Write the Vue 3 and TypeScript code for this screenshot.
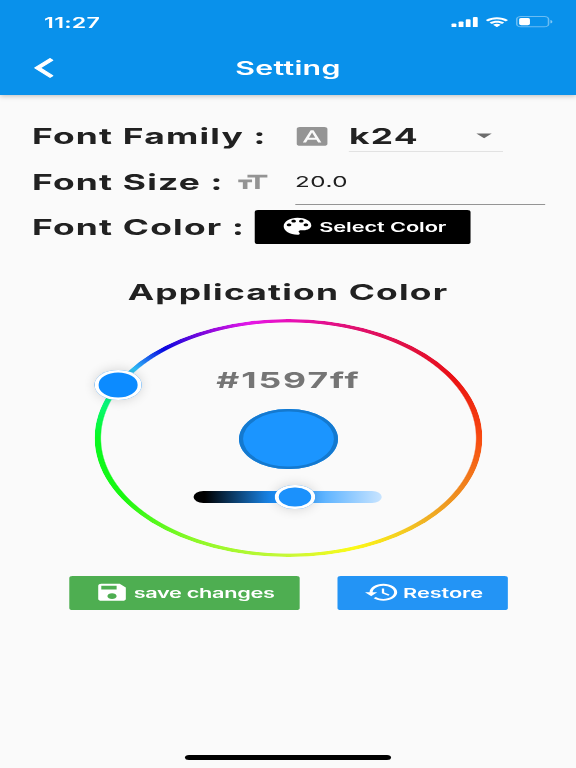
<script setup lang="ts">
import { ref } from 'vue'

const time = '11:27'
const family = ref('k24')
const size = ref('20.0')
const color = ref('#1597ff')

const icons = {
  back: 'M11.67 3.87L9.9 2.1 0 12l9.9 9.9 1.77-1.77L3.54 12z',
  font: 'M9.93 13.5h4.14L12 7.98zM20 2H4c-1.1 0-2 .9-2 2v16c0 1.1.9 2 2 2h16c1.1 0 2-.9 2-2V4c0-1.1-.9-2-2-2zm-4.05 16.5l-1.14-3H9.17l-1.12 3H5.96l5.11-13h1.86l5.11 13h-2.09z',
  size: 'M9 4v3h5v12h3V7h5V4H9zm-6 8h3v7h3v-7h3V9H3v3z',
  drop: 'M7 10l5 5 5-5z',
  palette:
    'M12 3c-4.97 0-9 4.03-9 9s4.03 9 9 9c.83 0 1.5-.67 1.5-1.5 0-.39-.15-.74-.39-1.01-.23-.26-.38-.61-.38-.99 0-.83.67-1.5 1.5-1.5H16c2.76 0 5-2.24 5-5 0-4.42-4.03-8-9-8zm-5.5 9c-.83 0-1.5-.67-1.5-1.5S5.67 9 6.5 9 8 9.67 8 10.5 7.33 12 6.5 12zm3-4C8.67 8 8 7.33 8 6.5S8.67 5 9.5 5s1.5.67 1.5 1.5S10.33 8 9.5 8zm5 0c-.83 0-1.5-.67-1.5-1.5S13.67 5 14.5 5s1.5.67 1.5 1.5S15.33 8 14.5 8zm3 4c-.83 0-1.5-.67-1.5-1.5S16.67 9 17.5 9s1.5.67 1.5 1.5-.67 1.5-1.5 1.5z',
  save: 'M17 3H5c-1.11 0-2 .9-2 2v14c0 1.1.89 2 2 2h14c1.1 0 2-.9 2-2V7l-4-4zm-5 16c-1.66 0-3-1.34-3-3s1.34-3 3-3 3 1.34 3 3-1.34 3-3 3zm3-10H5V5h10v4z',
  restore:
    'M13 3c-4.97 0-9 4.03-9 9H1l3.89 3.89.07.14L9 12H6c0-3.87 3.13-7 7-7s7 3.13 7 7-3.13 7-7 7c-1.93 0-3.68-.79-4.94-2.06l-1.42 1.42C8.27 19.99 10.51 21 13 21c4.97 0 9-4.03 9-9s-4.03-9-9-9zm-1 5v5l4.28 2.54.72-1.21-3.5-2.08V8H12z',
}
</script>

<template>
  <div class="screen">
    <header class="header">
      <div class="status">
        <span class="time">{{ time }}</span>
        <div class="indicators">
          <svg class="signal" viewBox="0 0 17 11">
            <rect x="0" y="6.8" width="3.1" height="4.2" rx="0.8" />
            <rect x="4.6" y="4.8" width="3.1" height="6.2" rx="0.8" />
            <rect x="9.2" y="2.4" width="3.1" height="8.6" rx="0.8" />
            <rect x="13.8" y="0" width="3.1" height="11" rx="0.8" />
          </svg>
          <svg class="wifi" viewBox="0 0 15 11">
            <path d="M7.5 2.3c2.1 0 4 .8 5.5 2.2.1.1.3.1.4 0l1.1-1.1c.1-.1.1-.3 0-.4-3.9-3.7-10.1-3.7-14 0-.1.1-.1.3 0 .4l1.1 1.1c.1.1.3.1.4 0C3.5 3.1 5.4 2.3 7.5 2.3z" />
            <path d="M7.5 5.9c1.2 0 2.3.4 3.1 1.2.1.1.3.1.4 0l1.1-1.1c.1-.1.1-.3 0-.4-2.6-2.4-6.6-2.4-9.2 0-.1.1-.1.3 0 .4L4 7.1c.1.1.3.1.4 0C5.2 6.3 6.3 5.9 7.5 5.9z" />
            <path d="M9.7 8.3c.1-.1.1-.3 0-.4-1.3-1.1-3.1-1.1-4.4 0-.1.1-.1.3 0 .4l2 2c.1.1.3.1.4 0z" />
          </svg>
          <svg class="battery" viewBox="0 0 24 11.5">
            <rect class="shell" x="0.5" y="0.5" width="20" height="10.3" rx="2.6" />
            <rect x="2" y="2" width="6.8" height="7.3" rx="1.4" />
            <path class="cap" d="M21.7 4v3.4c.8-.3 1.2-1 1.2-1.7s-.4-1.4-1.2-1.7z" />
          </svg>
        </div>
      </div>
      <div class="nav">
        <svg class="back" viewBox="-0.5 1.5 13 21"><path :d="icons.back" /></svg>
        <h1 class="title">Setting</h1>
      </div>
    </header>

    <main class="body">
      <section class="row">
        <span class="label family-label">Font Family :</span>
        <svg class="icon grey" viewBox="0 0 24 24"><path :d="icons.font" /></svg>
        <div class="select">
          <span class="label">{{ family }}</span>
          <svg class="icon drop" viewBox="0 0 24 24"><path :d="icons.drop" /></svg>
        </div>
      </section>
      <section class="row size-row">
        <span class="label size-label">Font Size :</span>
        <svg class="icon grey" viewBox="0 0 24 24"><path :d="icons.size" /></svg>
        <div class="field">{{ size }}</div>
      </section>
      <section class="row color-row">
        <span class="label color-label">Font Color :</span>
        <button class="btn black">
          <svg class="icon" viewBox="0 0 24 24"><path :d="icons.palette" /></svg>
          <span class="select-text">Select Color</span>
        </button>
      </section>

      <h2 class="label heading">Application Color</h2>

      <div class="picker">
        <div class="ring"></div>
        <div class="knob hue-knob"></div>
        <span class="hex">{{ color }}</span>
        <div class="swatch"></div>
        <div class="slider"><div class="knob light-knob"></div></div>
      </div>

      <div class="actions">
        <button class="btn green">
          <svg class="icon" viewBox="0 0 24 24"><path :d="icons.save" /></svg>
          <span class="save-text">save changes</span>
        </button>
        <button class="btn blue">
          <svg class="icon" viewBox="0 0 24 24"><path :d="icons.restore" /></svg>
          <span class="restore-text">Restore</span>
        </button>
      </div>
    </main>
    <div class="home"></div>
  </div>
</template>

<style>
body {
  background: #fafafa;
  overflow: hidden;
}
</style>

<style scoped>
* {
  box-sizing: border-box;
}
/* A 355px wide phone layout, widened to fill the viewport. */
.screen {
  display: flex;
  flex-direction: column;
  width: 355px;
  height: 768px;
  transform: scaleX(1.62254);
  transform-origin: 0 0;
  background: #fafafa;
  color: #212121;
  font-family: Inter, Roboto, sans-serif;
  white-space: nowrap;
}
.header {
  height: 94.5px;
  flex: none;
  background: #0991eb;
  color: #fff;
  box-shadow: 0 1px 4px rgba(0, 0, 0, 0.25);
}
.status {
  display: flex;
  justify-content: space-between;
  align-items: center;
  height: 42px;
  padding: 2px 13.5px 0 27.2px;
}
.time {
  font-size: 14.3px;
  font-weight: 600;
  letter-spacing: 0.15px;
}
.indicators {
  display: flex;
  align-items: center;
  gap: 4.5px;
}
svg {
  display: block;
  flex: none;
  fill: currentColor;
}
.signal {
  width: 16.8px;
  height: 10.5px;
}
.wifi {
  width: 14.5px;
  height: 10.6px;
}
.battery {
  width: 23.5px;
  height: 11.5px;
}
.shell {
  fill: none;
  stroke: #fff;
  stroke-opacity: 0.4;
}
.cap {
  fill-opacity: 0.5;
}
.nav {
  display: grid;
  grid-template-columns: 60px 1fr 60px;
  align-items: center;
  height: 52px;
}
.back {
  width: 12.3px;
  height: 19.9px;
  margin-left: 20.5px;
  stroke: #fff;
  stroke-width: 1;
}
.title {
  margin: 1px 0 0;
  text-align: center;
  font-size: 18.7px;
  font-weight: 600;
  letter-spacing: 0.15px;
}
.body {
  flex: 1;
  padding: 19px 0 0 19.7px;
}
.row {
  display: flex;
  align-items: center;
  height: 45.3px;
}
.label {
  font-size: 21.8px;
  font-weight: 700;
  letter-spacing: 0.75px;
}
.family-label {
  width: 161.1px;
}
.size-row {
  margin-top: 0.7px;
}
.color-row {
  margin-top: -0.7px;
}
.size-label {
  width: 124.1px;
}
.color-label {
  width: 137.7px;
}
.icon {
  width: 22.7px;
  height: 22.7px;
}
.grey {
  color: #949494;
}
.select {
  display: flex;
  align-items: center;
  justify-content: space-between;
  width: 95px;
  height: 31px;
  margin-left: 11.2px;
  padding-left: 0.5px;
  border-bottom: 1px solid #e2e2e2;
}
.drop {
  color: #6c6c6c;
}
.field {
  width: 154px;
  height: 45.3px;
  margin-left: 15.4px;
  border-bottom: 1px solid #949494;
  line-height: 46px;
  font-size: 14.9px;
  letter-spacing: 0.3px;
}
.btn {
  display: flex;
  align-items: center;
  height: 34.3px;
  padding: 0 0 0 15.1px;
  border: 0;
  border-radius: 2px;
  color: #fff;
  font-family: inherit;
  font-size: 13.4px;
  font-weight: 600;
}
.black {
  width: 133.1px;
  background: #000;
}
.heading {
  margin: 22.3px 0 0 -19.7px;
  text-align: center;
  line-height: 40px;
}
.picker {
  position: relative;
  width: 238.4px;
  height: 238.4px;
  margin: 7px 0 0 38.6px;
  transform: translateX(0.3px);
  display: flex;
  flex-direction: column;
  align-items: center;
}
.ring {
  position: absolute;
  inset: 0;
  border-radius: 50%;
  background: conic-gradient(#e810b8 0deg, #e01070 20deg, #e01040 40deg, #ea1014 59deg, #f03010 75deg, #f84a10 90deg, #ee9020 120deg, #f0b424 135deg, #fcfa18 160deg, #c8f838 180deg, #8cf828 210deg, #18f810 240deg, #08f820 270deg, #08f880 288deg, #30c0f8 306deg, #0808e0 319deg, #8c08dc 335deg, #e418e8 348deg, #e810b8 360deg);
  mask: radial-gradient(circle, transparent 115.2px, #000 116px);
}
.knob {
  position: absolute;
  border-radius: 50%;
  box-shadow: inset 0 0 0 2.5px #fff, 0 0 9px rgba(0, 0, 0, 0.16);
}
.hue-knob {
  width: 29.6px;
  height: 29.6px;
  left: -0.4px;
  top: 51.7px;
  background: #0c8bff;
}
.hex {
  height: 30px;
  margin-top: 46.5px;
  line-height: 30px;
  font-size: 21.9px;
  font-weight: 700;
  letter-spacing: 1.2px;
  color: #757575;
}
.swatch {
  width: 60.6px;
  height: 60.6px;
  margin-top: 13.5px;
  border-radius: 50%;
  background: #1b95ff;
  box-shadow: inset 0 0 0 2.5px #1479cf;
}
.slider {
  position: relative;
  width: 116px;
  height: 12px;
  margin-top: 21.8px;
  border-radius: 6px;
  background: linear-gradient(90deg, #000 6%, #1b8ffa 43%, #1b95ff 50%, #c8e4ff 100%);
}
.light-knob {
  width: 24.6px;
  height: 24.6px;
  left: 50px;
  top: -6.3px;
  background: #1b91fc;
}
.actions {
  display: flex;
  gap: 23.1px;
  margin: 18.5px 0 0 23px;
}
.green {
  width: 142.7px;
  background: #4eae51;
  transform: translateX(-0.3px);
}
.blue {
  width: 104.2px;
  background: #2394f5;
}
.select-text {
  margin-left: 1.6px;
  letter-spacing: -0.05px;
}
.save-text {
  margin-left: 2.2px;
  letter-spacing: -0.2px;
}
.restore-text {
  margin-left: 2.2px;
  letter-spacing: -0.05px;
}
.home {
  width: 126.5px;
  height: 5px;
  flex: none;
  margin: 0 auto 8px;
  border-radius: 3px;
  background: #000;
}
</style>
